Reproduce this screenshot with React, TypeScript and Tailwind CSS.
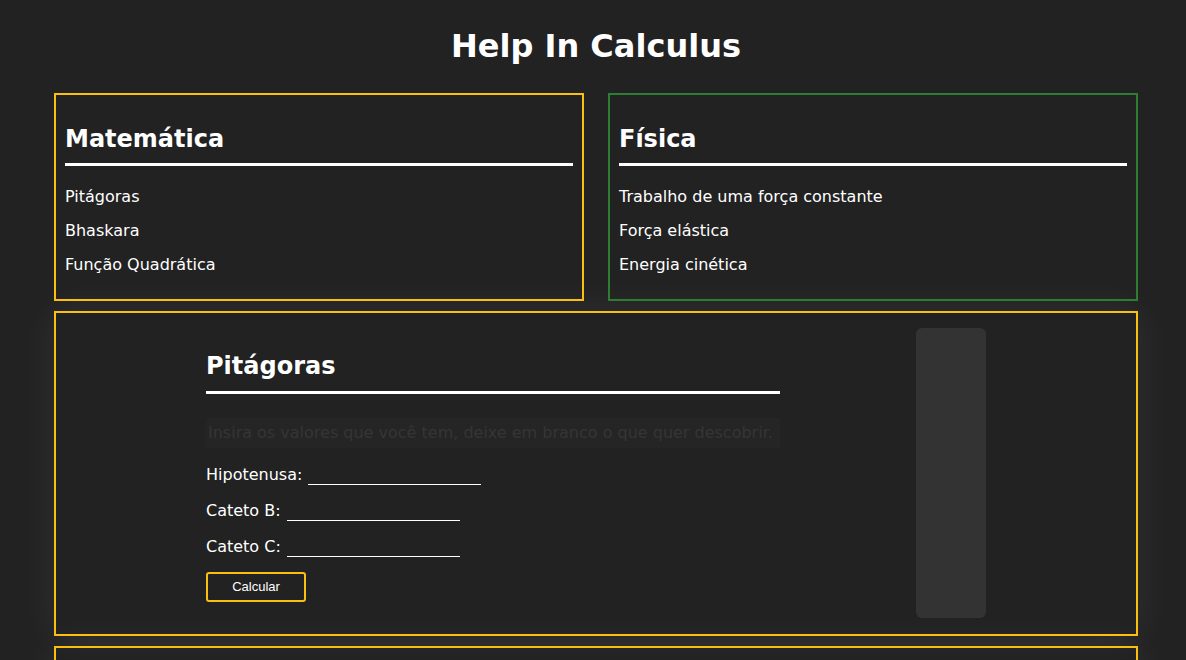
const font = { fontFamily: '"DejaVu Sans", Verdana, sans-serif' };

function TopicCard({ title, items, border }: { title: string; items: string[]; border: string }) {
  return (
    <div className={`border-2 ${border} px-[9px] pt-[28px] pb-[17px]`}>
      <h2 className="border-b-[3px] border-white pb-[8px] text-[24px] leading-[32px] font-bold text-white">{title}</h2>
      <ul className="mt-[14px]">
        {items.map((item) => (
          <li key={item} className="text-[16px] leading-[34px] text-white">
            {item}
          </li>
        ))}
      </ul>
    </div>
  );
}

function Field({ label }: { label: string }) {
  return (
    <div className="flex items-center text-[16px] leading-[36px] text-white">
      <label>{label}</label>
      <input className="ml-[6px] h-[20px] w-[173px] border-b border-white bg-transparent text-white outline-none" />
    </div>
  );
}

export default function App() {
  return (
    <div className="min-h-[660px] overflow-hidden bg-[#222222] pr-[48px] pl-[54px]" style={font}>
      <h1 className="pt-[26px] pb-[27px] text-center text-[32px] leading-[40px] font-bold text-white">Help In Calculus</h1>

      <div className="grid grid-cols-2 gap-6">
        <TopicCard title="Matemática" items={['Pitágoras', 'Bhaskara', 'Função Quadrática']} border="border-[#fbbf0f]" />
        <TopicCard
          title="Física"
          items={['Trabalho de uma força constante', 'Força elástica', 'Energia cinética']}
          border="border-[#2e7d32]"
        />
      </div>

      <div className="mt-[10px] flex border-2 border-[#fbbf0f] pt-[15px] pb-[16px] pl-[150px] shadow-[0_0_40px_rgba(255,255,255,0.07)]">
        <div className="w-[574px] pt-[22px]">
          <h2 className="border-b-[3px] border-white pb-[9px] text-[24px] leading-[32px] font-bold text-white">Pitágoras</h2>
          <p className="mt-[24px] h-[30px] bg-[#252525] px-[2px] text-[16px] leading-[30px] whitespace-nowrap text-[#353535]">
            Insira os valores que você tem, deixe em branco o que quer descobrir.
          </p>
          <div className="mt-[9px]">
            <Field label="Hipotenusa:" />
            <Field label="Cateto B:" />
            <Field label="Cateto C:" />
          </div>
          <button
            className="mt-[7px] h-[30px] w-[100px] rounded-[3px] border-2 border-[#fbbf0f] bg-transparent text-[13px] text-white"
            style={{ fontFamily: '"Liberation Sans", Arial, sans-serif' }}
          >
            Calcular
          </button>
        </div>
        <div className="ml-[136px] h-[290px] w-[70px] rounded-md bg-[#333333]" />
      </div>

      <div className="mt-[10px] h-[200px] border-2 border-[#fbbf0f] shadow-[0_0_40px_rgba(255,255,255,0.07)]" />
    </div>
  );
}
